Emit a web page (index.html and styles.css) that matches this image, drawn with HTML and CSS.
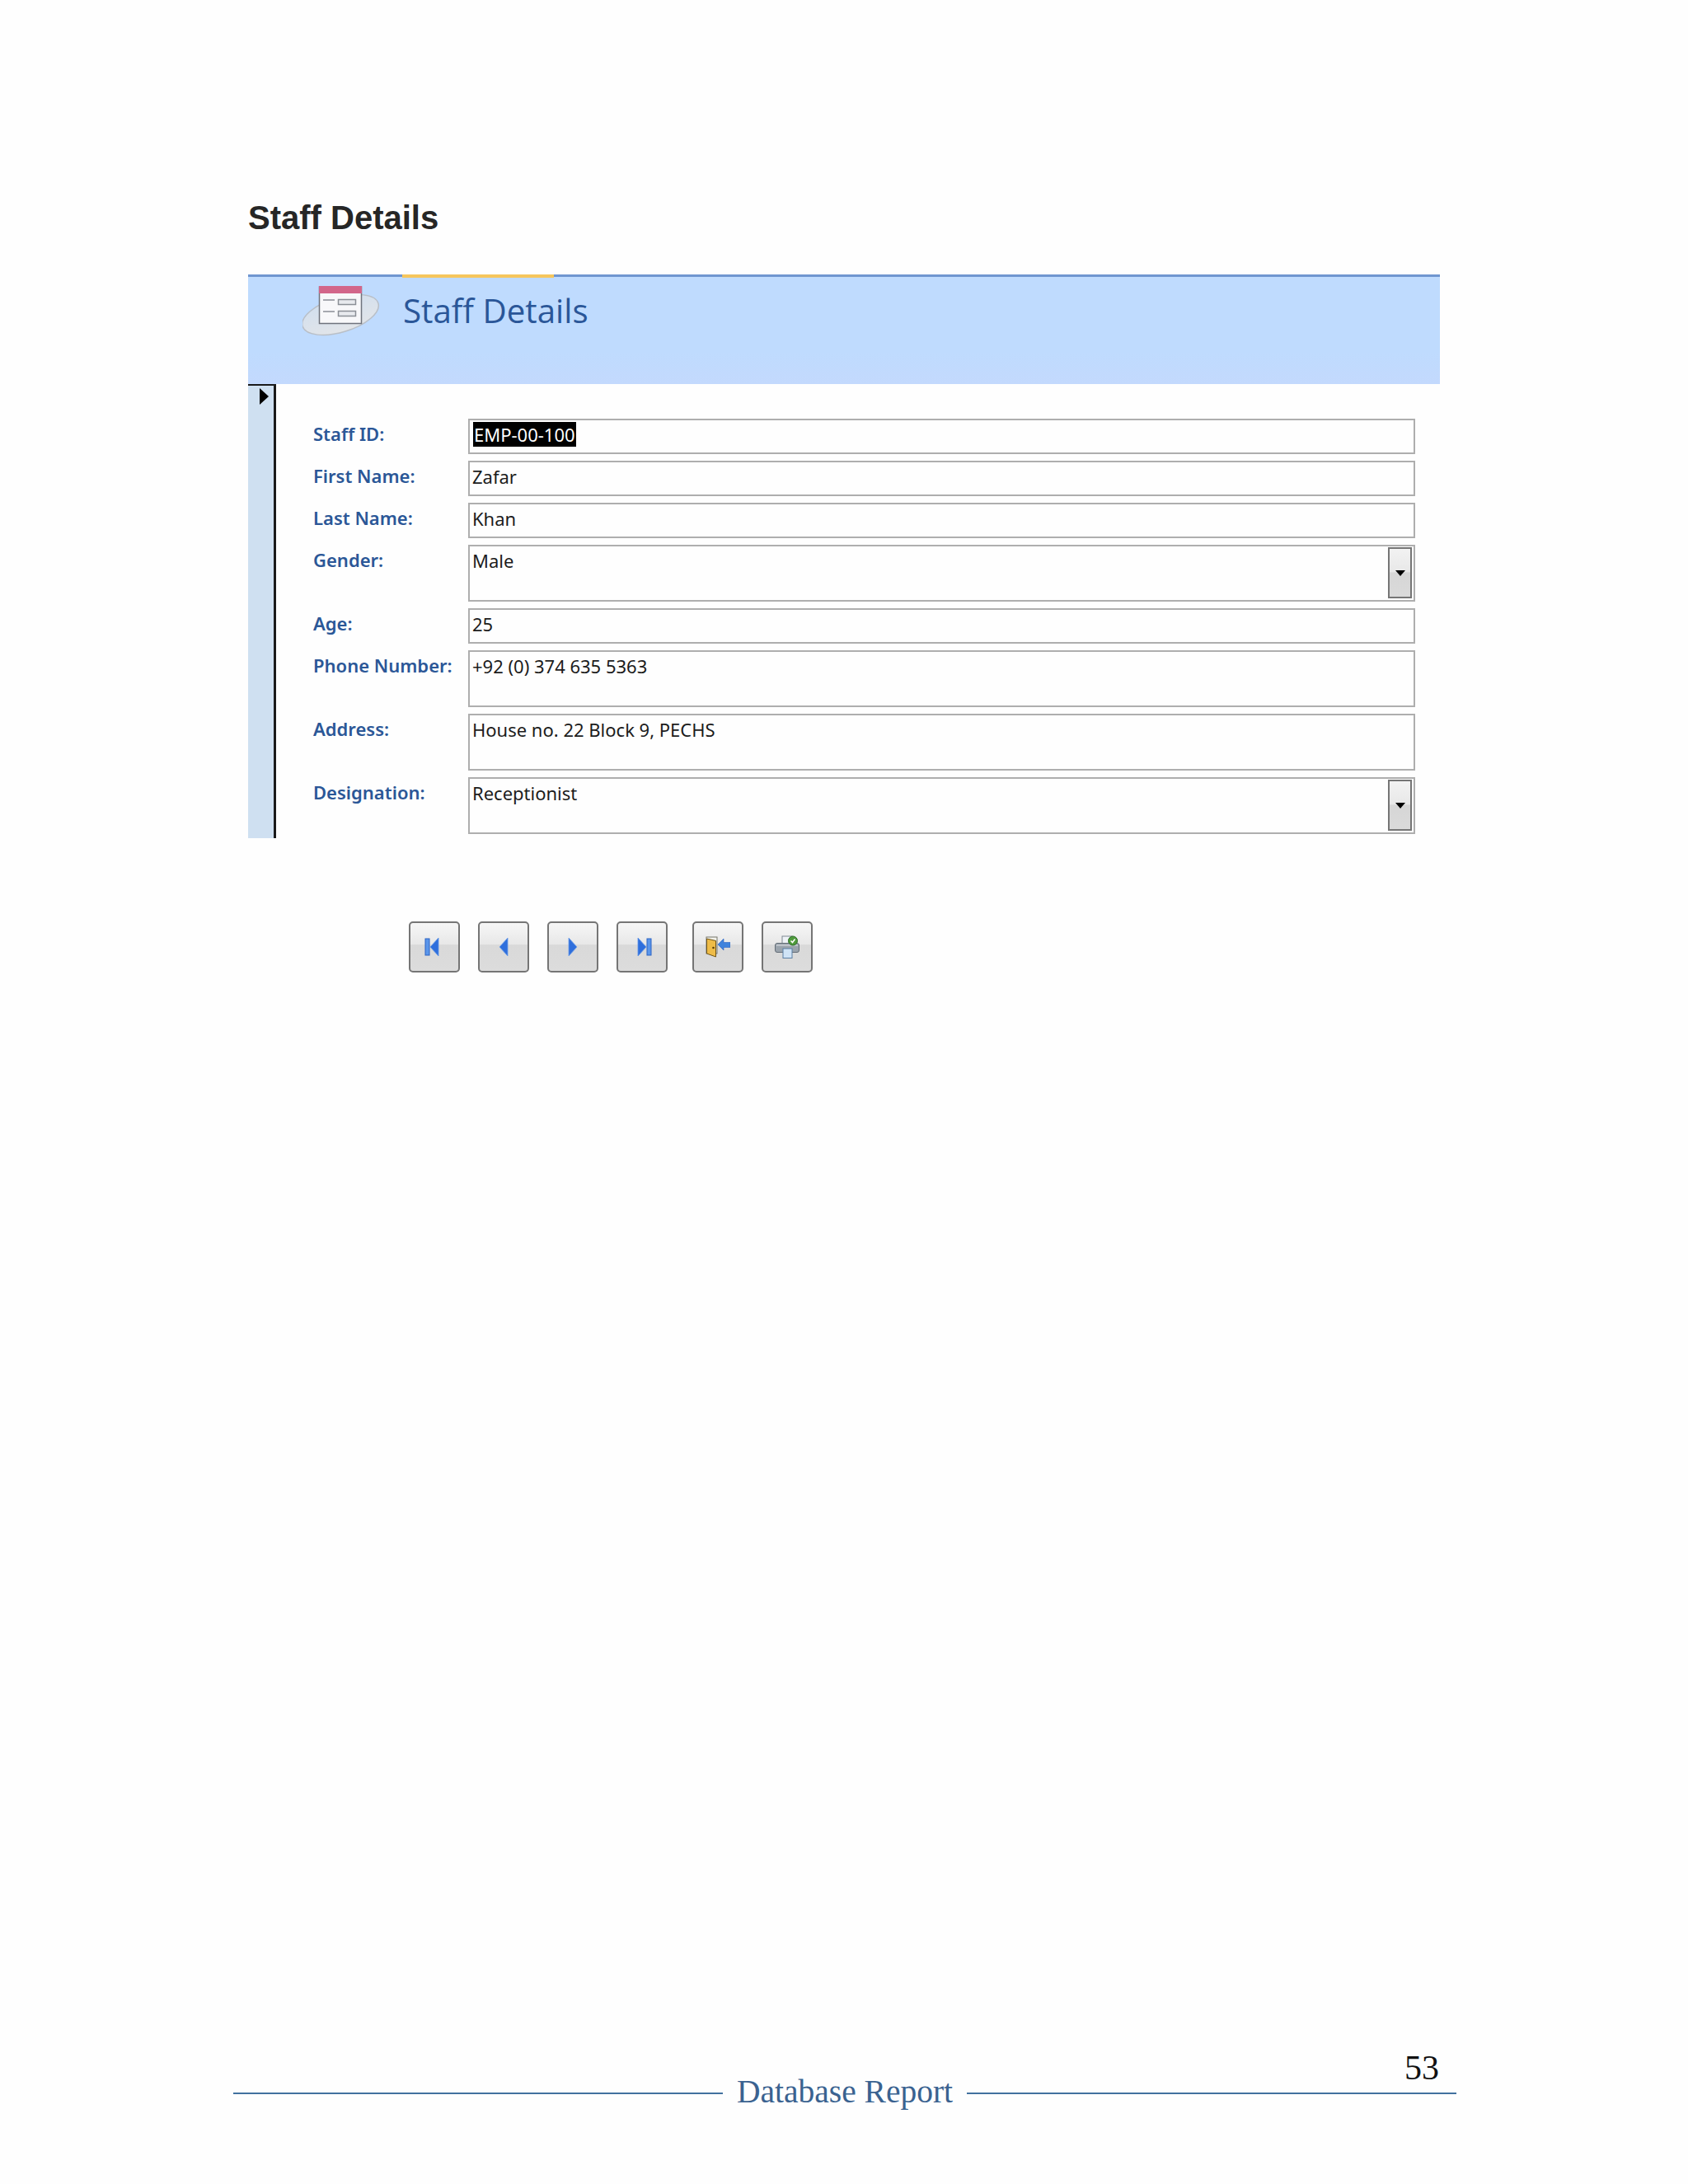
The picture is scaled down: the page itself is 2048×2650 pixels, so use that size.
FILE: index.html
```html
<!DOCTYPE html>
<html lang="en">
<head>
    <meta charset="UTF-8">
    <title>Staff Details</title>
    <link rel="stylesheet" href="styles.css">
</head>
<body>
    <div class="page">
        <h1 class="page-title">Staff Details</h1>

        <div class="form-header">
            <div class="tab-accent"></div>
            <svg class="form-icon" width="100" height="68" viewBox="0 0 100 68">
                <defs>
                    <linearGradient id="disc" x1="0" y1="0" x2="0" y2="1">
                        <stop offset="0" stop-color="#d2dfee"/>
                        <stop offset="1" stop-color="#e2e5e9"/>
                    </linearGradient>
                </defs>
                <ellipse cx="46" cy="35" rx="48" ry="21" transform="rotate(-17 46 35)" fill="url(#disc)" stroke="#b9bfc7" stroke-width="1.5"/>
                <rect x="20.500" y="1" width="51" height="44.500" fill="#f8f8fa" stroke="#6f737c" stroke-width="1.500"/>
                <rect x="20" y="0" width="52" height="9" fill="#d2668a"/>
                <path d="M25 17h14M25 31h14" stroke="#8b8f96" stroke-width="1.500"/>
                <rect x="43.500" y="16.500" width="21" height="6" fill="#e8eaee" stroke="#8b8f96" stroke-width="1.500"/>
                <rect x="43.500" y="30.500" width="21" height="6" fill="#e8eaee" stroke="#8b8f96" stroke-width="1.500"/>
            </svg>
            <h2 class="form-title">Staff Details</h2>
        </div>

        <div class="form-body">
            <div class="record-selector"><span class="selector-arrow"></span></div>
            <div class="fields">
                <label class="field-label">Staff ID:</label>
                <div class="field"><span class="selected">EMP-00-100</span></div>

                <label class="field-label">First Name:</label>
                <div class="field">Zafar</div>

                <label class="field-label">Last Name:</label>
                <div class="field">Khan</div>

                <label class="field-label">Gender:</label>
                <div class="field tall combo">Male<span class="combo-button"><span class="combo-arrow"></span></span></div>

                <label class="field-label">Age:</label>
                <div class="field">25</div>

                <label class="field-label">Phone Number:</label>
                <div class="field tall">+92 (0) 374 635 5363</div>

                <label class="field-label">Address:</label>
                <div class="field tall">House no. 22 Block 9, PECHS</div>

                <label class="field-label">Designation:</label>
                <div class="field tall combo">Receptionist<span class="combo-button"><span class="combo-arrow"></span></span></div>
            </div>
        </div>

        <div class="nav-buttons">
            <button class="nav-button">
                <svg width="24" height="22" viewBox="0 0 24 22"><rect x="1" y="1" width="5" height="20" fill="#5b96ea" stroke="#2a62c4"/><path d="M17 0v22L7 11z" fill="#2f6fdc" stroke="#5f96e8" stroke-width=".8"/></svg>
            </button>
            <button class="nav-button">
                <svg width="12" height="22" viewBox="0 0 12 22"><path d="M11 0v22L1 11z" fill="#2f6fdc" stroke="#6f9fe8" stroke-width=".8"/></svg>
            </button>
            <button class="nav-button">
                <svg width="12" height="22" viewBox="0 0 12 22"><path d="M1 0v22l10-11z" fill="#2f6fdc" stroke="#6f9fe8" stroke-width=".8"/></svg>
            </button>
            <button class="nav-button">
                <svg width="24" height="22" viewBox="-4 0 24 22"><path d="M3 0v22l10-11z" fill="#2f6fdc" stroke="#5f96e8" stroke-width=".8"/><rect x="14" y="1" width="5" height="20" fill="#5b96ea" stroke="#2a62c4"/></svg>
            </button>
            <button class="nav-button gap-left">
                <svg width="30" height="26" viewBox="0 0 30 26"><rect x="1" y="1" width="13" height="20" fill="#f1f1ea" stroke="#77776c"/><path d="M1.500 3l11 2.500V25l-11-4z" fill="#eebc48" stroke="#6f5418"/><circle cx="9.500" cy="14" r="1.300" fill="#5a400c"/><path d="M15 10l7-7v4.500h8v6h-8V17z" fill="#3f82dc" stroke="#2a62c4" stroke-width=".6"/></svg>
            </button>
            <button class="nav-button">
                <svg width="30" height="28" viewBox="0 0 30 28"><rect x="9" y="1" width="12" height="10" fill="#eef2f6" stroke="#7e8892"/><rect x=".5" y="9.500" width="29" height="11" rx="2.500" fill="#9aa3ac" stroke="#646d77"/><path d="M2 12h26" stroke="#c8ced4" stroke-width="1.500"/><rect x="10" y="16" width="11" height="11.500" fill="#cfe3f6" stroke="#5d80a4"/><circle cx="22" cy="6.500" r="5.500" fill="#4f9a3c" stroke="#2f6f2a"/><path d="M19.500 6.500l2 2 3-4" fill="none" stroke="#fff" stroke-width="1.500"/></svg>
            </button>
        </div>

        <div class="spacer"></div>

        <div class="page-number">53</div>
        <div class="footer">
            <span class="footer-line"></span>
            <span class="footer-text">Database Report</span>
            <span class="footer-line"></span>
        </div>
    </div>
</body>
</html>
```

FILE: styles.css
```css
* {
    box-sizing: border-box;
}
body {
    margin: 0;
    background-color: #fefefe;
}
.page {
    display: flex;
    flex-direction: column;
    width: 2048px;
    height: 2650px;
    padding: 241px 301px 0;
    overflow: hidden;
}
.page-title {
    margin: 0 0 45px;
    font-family: "Liberation Sans", Arial, sans-serif;
    font-size: 40px;
    line-height: 47px;
    font-weight: bold;
    color: #262626;
}
.form-header {
    position: relative;
    display: flex;
    height: 133px;
    padding: 11px 0 0 66px;
    gap: 22px;
    border-top: 3px solid #7096d0;
    background: linear-gradient(#bfdbfe 70%, #c3d9fd);
}
.tab-accent {
    position: absolute;
    left: 187px;
    top: -3px;
    width: 184px;
    height: 4px;
    background-color: #f6c65c;
}
.form-icon {
    flex: none;
}
.form-title {
    margin: 3px 0 0;
    font-family: "Open Sans", "Noto Sans", sans-serif;
    font-size: 40.300px;
    line-height: 54px;
    font-weight: normal;
    color: #2a5698;
}
.form-body {
    display: flex;
    height: 551px;
}
.record-selector {
    flex: none;
    width: 34px;
    padding: 3px 0 0 14px;
    background-color: #cfe0f1;
    border-top: 2px solid #1a1a1a;
    border-right: 3px solid #1a1a1a;
}
.selector-arrow {
    display: block;
    width: 0;
    height: 0;
    border-left: 11px solid #000;
    border-top: 10px solid transparent;
    border-bottom: 10px solid transparent;
}
.fields {
    display: grid;
    grid-template-columns: 188px 1149px;
    row-gap: 8px;
    align-content: start;
    padding: 42px 0 0 45px;
    font-size: 22px;
}
.field-label {
    padding-top: 3px;
    font-family: "Noto Sans", "Open Sans", sans-serif;
    font-weight: 600;
    line-height: 30px;
    color: #2b5797;
}
.field {
    position: relative;
    height: 43px;
    padding: 2px 0 0 3px;
    border: 2px solid #aeaeae;
    background-color: #fefefe;
    font-family: "Noto Sans", "Open Sans", sans-serif;
    line-height: 30px;
    color: #1c1c1c;
}
.tall {
    height: 69px;
}
.selected {
    display: inline-block;
    margin-left: 1px;
    padding: 0 1px;
    background-color: #000;
    color: #fff;
}
.combo-button {
    position: absolute;
    top: 1px;
    right: 2px;
    display: flex;
    align-items: center;
    justify-content: center;
    width: 29px;
    height: 62px;
    border: 2px solid #757575;
    background: linear-gradient(#f2f2f2, #e8e8e8 48%, #d6d6d6 50%, #dadada);
}
.combo-arrow {
    width: 0;
    height: 0;
    border-top: 7px solid #000;
    border-left: 6px solid transparent;
    border-right: 6px solid transparent;
}
.nav-buttons {
    display: flex;
    gap: 22px;
    margin: 101px 0 0 195px;
}
.nav-button {
    display: flex;
    align-items: center;
    justify-content: center;
    width: 62px;
    height: 62px;
    padding: 0;
    border: 2px solid #757575;
    border-radius: 5px;
    background: linear-gradient(#f6f6f6, #e8e8e8 44%, #d9d9d9 46%, #dcdcdc);
}
.gap-left {
    margin-left: 8px;
}
.spacer {
    flex: 1;
}
.page-number {
    margin-right: 1px;
    font-family: "Liberation Serif", serif;
    font-size: 42px;
    line-height: 46px;
    text-align: right;
    color: #111;
}
.footer {
    display: flex;
    align-items: center;
    gap: 17px;
    margin: -14px -20px 88px -18px;
}
.footer-line {
    flex: 1;
    height: 2px;
    background-color: #41719f;
}
.footer-text {
    position: relative;
    top: -2px;
    font-family: "Liberation Serif", serif;
    font-size: 39.500px;
    line-height: 44px;
    color: #3a6290;
}
```
